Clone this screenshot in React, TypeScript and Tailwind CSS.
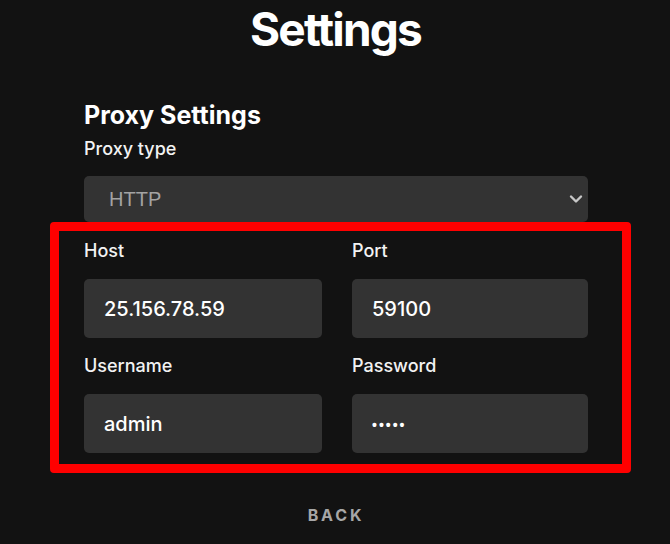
import { useState } from "react";

function Chevron() {
  return (
    <svg aria-hidden="true" fill="none" height="10" viewBox="0 0 14 10" width="14">
      <path d="M2 2.5L7 7.5L12 2.5" stroke="#c8c8c8" strokeLinecap="round" strokeLinejoin="round" strokeWidth="2.4" />
    </svg>
  );
}

function Field({ label, value, secret }: { label: string; value: string; secret?: boolean }) {
  return (
    <div className="flex flex-col">
      <label className="text-[18px] font-medium leading-6 text-[#f2f2f2]">{label}</label>
      <div className="mt-4 flex h-[59px] items-center rounded-[5px] bg-[#333333] px-5">
        {secret ? (
          <span className="pt-[2px] font-['Liberation_Sans',sans-serif] text-[14px] font-bold leading-none tracking-[2px] text-white">
            •••••
          </span>
        ) : (
          <span className="text-[20px] font-medium leading-none text-white">{value}</span>
        )}
      </div>
    </div>
  );
}

export default function App() {
  const [proxy] = useState({ host: "25.156.78.59", port: "59100", user: "admin", pass: "admin" });

  return (
    <div className="min-h-[544px] overflow-hidden bg-[#121212] font-['Inter',sans-serif] text-white">
      <h1 className="pl-px pt-[6px] text-center text-[46px] font-bold leading-none tracking-[-0.04em]">Settings</h1>
      <div className="ml-[84px] mt-[47px] w-[504px]">
        <h2 className="pt-px text-[25px] font-bold leading-[30px]">Proxy Settings</h2>
        <p className="mt-[7px] text-[18px] font-medium leading-6 text-[#f2f2f2]">Proxy type</p>
        <div className="mt-[15px] flex h-[46px] items-center justify-between rounded-[5px] bg-[#333333] pl-[25px] pr-[5px]">
          <span className="font-['Liberation_Sans',sans-serif] text-[20px] leading-none text-[#a3a3a3]">HTTP</span>
          <Chevron />
        </div>
        <div className="-ml-[34px] -mr-[43px] rounded-[4px] border-[9px] border-[#ff0000] pb-[11px] pl-[25px] pr-[34px] pt-[8px]">
          <div className="grid grid-cols-[238px_236px] gap-x-[30px] gap-y-[16px]">
            <Field label="Host" value={proxy.host} />
            <Field label="Port" value={proxy.port} />
            <Field label="Username" value={proxy.user} />
            <Field label="Password" value={proxy.pass} secret />
          </div>
        </div>
        <div className="mt-[30px] text-center text-[16px] font-bold tracking-[0.18em] text-[#a7a7a7]">BACK</div>
      </div>
    </div>
  );
}
